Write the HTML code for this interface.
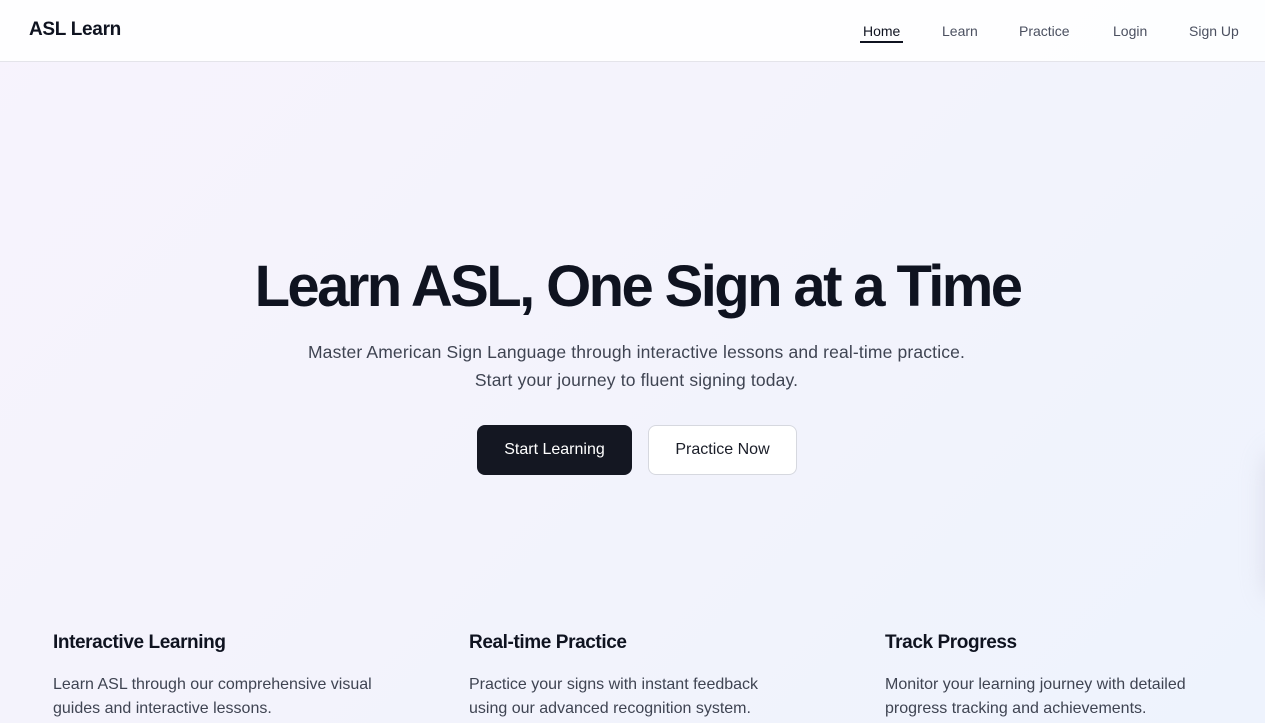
<!DOCTYPE html>
<html><head><meta charset="utf-8"><style>
*{margin:0;padding:0;box-sizing:border-box}
html,body{width:1265px;height:723px;overflow:hidden}
body{font-family:"Liberation Sans",sans-serif;background:linear-gradient(135deg,#f7f3fd 0%,#f3f3fc 50%,#eef3fd 100%);color:#0f1320;position:relative}
.nav{position:absolute;top:0;left:0;width:1265px;height:62px;background:rgba(255,255,255,.85);border-bottom:1px solid #e4e4ea}
.logo{position:absolute;left:29px;top:19px;font-size:19px;font-weight:bold;letter-spacing:-.3px}
.links a{position:absolute;top:23px;font-size:14px;color:#4b5060;text-decoration:none}
.home{color:#0f1320!important}
.home:after{content:"";position:absolute;left:-3px;right:-3px;top:18px;height:2px;background:#0f1320}
h1{position:absolute;top:253px;left:0;width:1275px;text-align:center;font-size:58px;font-weight:bold;letter-spacing:-2.6px}
.sub{position:absolute;top:338px;left:0;width:1273px;text-align:center;font-size:17.5px;line-height:28px;color:#3f4452;letter-spacing:.15px}
.b1{position:absolute;left:477px;top:425px;width:155px;height:50px;background:#141722;color:#fff;border-radius:8px;font-size:16px;text-align:center;line-height:50px}
.b2{position:absolute;left:648px;top:425px;width:149px;height:50px;background:#fff;border:1px solid #d6d8df;color:#1a1d28;border-radius:8px;font-size:16px;text-align:center;line-height:48px}
.f{position:absolute;top:632px;width:330px}
.f h3{font-size:19px;font-weight:bold;letter-spacing:-.4px;margin-bottom:19px}
.f p{font-size:16px;line-height:24px;color:#3f4452}
.shadow{position:absolute;right:-40px;top:450px;width:40px;height:150px;border-radius:20px;background:#ccd;filter:blur(12px);opacity:.6}
</style></head><body>
<div class="shadow"></div>
<div class="nav"><div class="logo">ASL Learn</div>
<div class="links"><a class="home" style="left:863px">Home</a><a style="left:942px">Learn</a><a style="left:1019px">Practice</a><a style="left:1113px">Login</a><a style="left:1189px">Sign Up</a></div></div>
<h1>Learn ASL, One Sign at a Time</h1>
<div class="sub">Master American Sign Language through interactive lessons and real-time practice.<br>Start your journey to fluent signing today.</div>
<div class="b1">Start Learning</div><div class="b2">Practice Now</div>
<div class="f" style="left:53px"><h3>Interactive Learning</h3><p>Learn ASL through our comprehensive visual guides and interactive lessons.</p></div>
<div class="f" style="left:469px"><h3>Real-time Practice</h3><p>Practice your signs with instant feedback using our advanced recognition system.</p></div>
<div class="f" style="left:885px"><h3>Track Progress</h3><p>Monitor your learning journey with detailed progress tracking and achievements.</p></div>
</body></html>
